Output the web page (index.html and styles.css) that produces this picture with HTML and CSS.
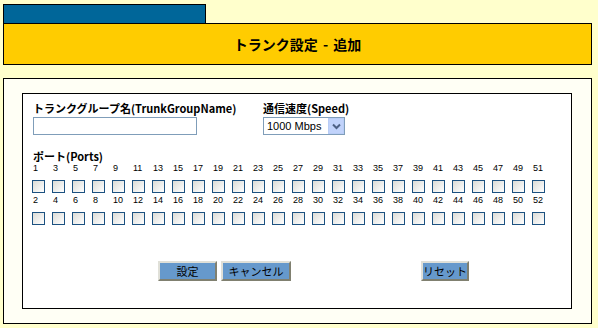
FILE: index.html
```html
<!DOCTYPE html>
<html lang="ja">
<head>
    <meta charset="UTF-8">
    <title>トランク設定 - 追加</title>
    <link rel="stylesheet" href="styles.css">
</head>
<body>

<div class="tab"></div>
<div class="header">
    <h1 class="title">トランク設定 - 追加</h1>
</div>

<div class="outer">
    <div class="inner">
        <div class="fields">
            <div class="field name-field">
                <label class="label" for="trunkName">トランクグループ名(TrunkGroupName)</label>
                <input id="trunkName" class="text-input" type="text">
            </div>
            <div class="field">
                <label class="label" for="speed">通信速度(Speed)</label>
                <div class="select-wrap">
                    <select id="speed" class="speed-select">
                        <option>1000 Mbps</option>
                    </select>
                    <span class="select-btn">
                        <svg width="9" height="7" viewBox="0 0 9 7">
                            <path d="M1 1.5 L4.5 5 L8 1.5" fill="none" stroke="#4d6185" stroke-width="2"/>
                        </svg>
                    </span>
                </div>
            </div>
        </div>

        <div class="label ports-label">ポート(Ports)</div>
        <div class="ports" id="ports"></div>

        <div class="buttons">
            <div class="btn-group">
                <button class="btn btn-set">設定</button>
                <button class="btn btn-cancel">キャンセル</button>
            </div>
            <button class="btn btn-reset">リセット</button>
        </div>
    </div>
</div>

<script>
// odd ports on the first row, even ports on the second
const ports = document.getElementById("ports");
const rows = [1, 2];

rows.forEach(start => {
    const nums = document.createElement("div");
    nums.className = "port-row num-row";
    const boxes = document.createElement("div");
    boxes.className = "port-row";

    for (let n = start; n <= 52; n += 2) {
        const num = document.createElement("span");
        num.className = "port-num";
        num.textContent = n;
        nums.appendChild(num);

        const cell = document.createElement("span");
        cell.className = "port-cell";
        const box = document.createElement("input");
        box.type = "checkbox";
        box.className = "port-box";
        cell.appendChild(box);
        boxes.appendChild(cell);
    }

    ports.appendChild(nums);
    ports.appendChild(boxes);
});
</script>
</body>
</html>
```

FILE: styles.css
```css
body {
    margin: 0;
    background: #ffffcc;
    font-family: "Noto Sans CJK JP", "DejaVu Sans", sans-serif;
}

/* blue tab on top of the title bar */
.tab {
    width: 201px;
    height: 18px;
    margin: 4px 0 0 3px;
    background: #006699;
    border: 1px solid #000;
    border-bottom: none;
}

.header {
    height: 40px;
    margin: 0 6px 0 3px;
    background: #ffcc00;
    border: 1px solid #000;
    display: flex;
    align-items: center;
    justify-content: center;
}

.title {
    margin: 0;
    font-size: 14px;
    font-weight: bold;
    color: #000;
    word-spacing: 2px;
}

.outer {
    margin: 13px 6px 0 3px;
    padding: 14px 19px 14px 18px;
    background: #fffff5;
    border: 1px solid #000;
}

.inner {
    box-sizing: border-box;
    height: 216px;
    padding: 7px 10px 0 10px;
    background: #fff;
    border: 1px solid #000;
}

.fields {
    display: flex;
    align-items: flex-start;
}

.field {
    display: flex;
    flex-direction: column;
}

.name-field {
    width: 230px;
}

.label {
    display: block;
    height: 15px;
    font-size: 11px;
    font-weight: bold;
    line-height: 15px;
    color: #000;
    white-space: nowrap;
}

.text-input {
    display: block;
    box-sizing: border-box;
    width: 164px;
    height: 18px;
    margin: 1px 0 0 0;
    padding: 1px;
    border: 1px solid #7f9db9;
    outline: none;
}

.select-wrap {
    position: relative;
    width: 82px;
    height: 18px;
    margin-top: 1px;
}

.speed-select {
    appearance: none;
    display: block;
    box-sizing: border-box;
    width: 82px;
    height: 18px;
    margin: 0;
    padding: 0 0 0 3px;
    border: 1px solid #7f9db9;
    border-radius: 0;
    background: #fff;
    font-family: "Liberation Sans", sans-serif;
    font-size: 11px;
    color: #000;
}

.select-btn {
    position: absolute;
    top: 1px;
    right: 1px;
    width: 16px;
    height: 16px;
    background: #c1d3fb;
    border: 1px solid #b9cdf6;
    box-sizing: border-box;
    display: flex;
    align-items: center;
    justify-content: center;
    pointer-events: none;
}

.ports-label {
    margin-top: 14px;
    height: 14px;
    line-height: 14px;
}

.ports {
    display: flex;
    flex-direction: column;
}

.port-row {
    display: flex;
    height: 18px;
}

.num-row {
    height: 14px;
}

.port-num {
    width: 20px;
    font-family: "Liberation Sans", sans-serif;
    font-size: 9px;
    line-height: 10px;
    color: #000;
}

.port-cell {
    width: 20px;
}

.port-box {
    appearance: none;
    display: block;
    width: 13px;
    height: 13px;
    margin: 3px 0 0 -1px;
    border: 1px solid #1c5180;
    border-radius: 0;
    background: linear-gradient(135deg, #dcdcd7, #ffffff);
}

.buttons {
    display: flex;
    margin: 34px 0 0 125px;
}

.btn-group {
    display: flex;
    gap: 4px;
    width: 263px;
}

.btn {
    height: 20px;
    padding: 0;
    background: #6699cc;
    border: 2px solid;
    border-color: #e0e0d8 #808070 #808070 #e0e0d8;
    font-family: "Noto Sans CJK JP", sans-serif;
    font-size: 11px;
    line-height: 14px;
    color: #000;
    white-space: nowrap;
}

.btn-set {
    width: 59px;
}

.btn-cancel {
    width: 70px;
}

.btn-reset {
    width: 48px;
}
```
